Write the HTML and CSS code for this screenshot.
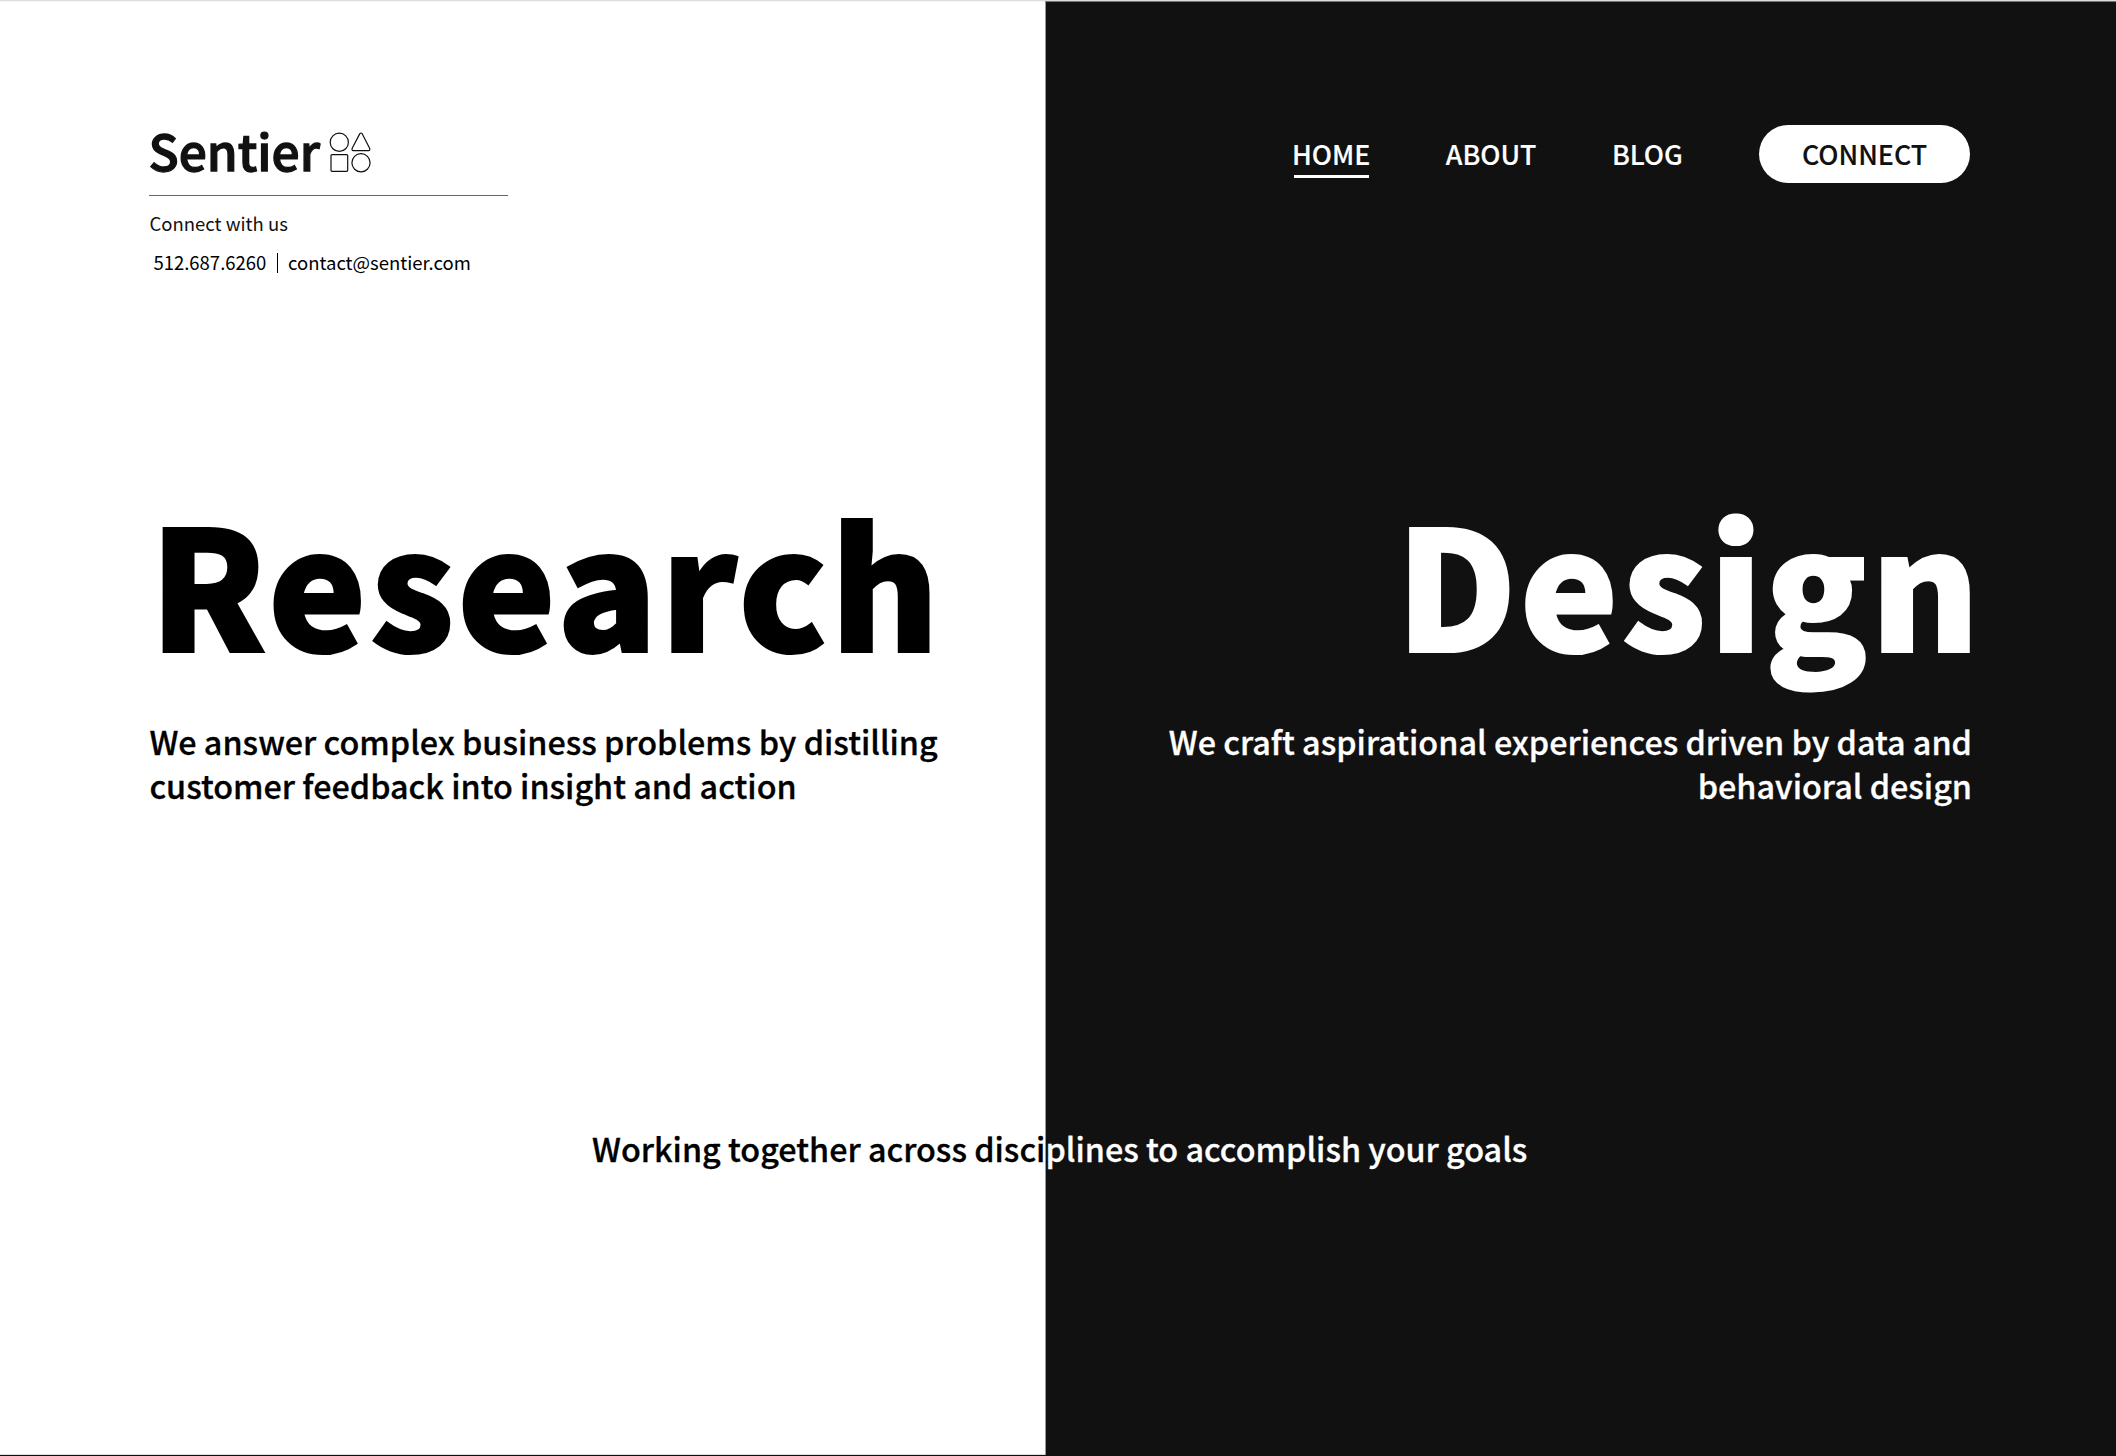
FILE: index.html
```html
<!DOCTYPE html>
<html lang="en">
<head>
<meta charset="utf-8">
<title>Sentier</title>
<link rel="stylesheet" href="styles.css">
</head>
<body>
<main class="page">
  <section class="panel research">
    <header class="top brand">
      <div class="logo">
        <span class="wordmark">Sentier</span>
        <svg class="mark" viewBox="0 0 44 42" width="44" height="42" fill="none" stroke="#111" stroke-width="1.2" stroke-linejoin="round">
          <circle cx="11.3" cy="11.3" r="9.1"/>
          <path d="M31.7 2.9Q33 1.1 34.3 2.9L41.6 17.2Q42.3 19.4 40.5 19.6H25.3Q23.5 19.4 24.2 17.2Z"/>
          <rect x="3" y="23.6" width="16.7" height="16.7" rx="1"/>
          <circle cx="33" cy="31.8" r="9.1"/>
        </svg>
      </div>
      <p class="contact">Connect with us</p>
      <p class="contact details"><span>512.687.6260</span><i class="bar"></i><span>contact@sentier.com</span></p>
    </header>
    <h1 class="title">Research</h1>
    <p class="lead">We answer complex business problems by distilling<br>customer feedback into insight and action</p>
  </section>
  <section class="panel design">
    <nav class="top nav">
      <a class="link active">HOME</a>
      <a class="link">ABOUT</a>
      <a class="link">BLOG</a>
      <a class="button">CONNECT</a>
    </nav>
    <h1 class="title">Design</h1>
    <p class="lead">We craft aspirational experiences driven by data and<br>behavioral design</p>
  </section>
  <p class="lead tagline"><span class="on-light">Working together across disci</span><span class="on-dark">plines to accomplish your goals</span></p>
</main>
</body>
</html>
```
FILE: styles.css
```css
* { box-sizing: border-box; margin: 0; padding: 0; }

body {
  font-family: "Noto Sans CJK SC", "Noto Sans", sans-serif;
  color: #000;
  background: #fff;
}

.page {
  position: relative;
  display: grid;
  grid-template-columns: 1045px 1fr;
  height: 1456px;
  overflow: hidden;
  border-top: 1px solid #ddd;
  border-bottom: 1px solid #111;
}

.panel { padding-top: 117px; }
.research {
  padding-left: 149px;
  background: #fff;
  border-top: 1px solid #f5f5f5;
  border-bottom: 1px solid #ddd;
}
.design {
  padding-right: 146px;
  background: #111;
  color: #fff;
  text-align: right;
  border-top: 1px solid #777;
  border-left: 1px solid #999;
}

.top { height: 376px; }

.logo {
  display: flex;
  align-items: flex-start;
  width: 358.5px;
  height: 77px;
  border-bottom: 1.4px solid #666;
}
.wordmark {
  font-size: 49.6px;
  line-height: 61px;
  font-weight: 500;
  color: #111;
  -webkit-text-stroke: 1.3px #111;
  width: 178px;
  margin-left: -0.5px;
  margin-right: 0.5px;
}
.mark { margin-top: 12px; margin-left: 1px; }

.contact { font-size: 18.5px; line-height: 28px; margin-top: 13px; padding-left: 0.5px; color: #111; }
.details { display: flex; align-items: center; margin-top: 10.5px; padding-left: 4.4px; color: #000; }
.bar { width: 1px; height: 20px; margin: 2px 10.3px 0; background: #000; }

.title {
  font-size: 165.8px;
  line-height: 170px;
  font-weight: 900;
  letter-spacing: 3px;
  -webkit-text-stroke: 2.2px currentColor;
}
.research .title { padding-left: 0.5px; }
.design .title { margin-right: -12.6px; }

.lead {
  font-size: 32.33px;
  line-height: 44px;
  font-weight: 500;
  white-space: nowrap;
  -webkit-text-stroke: 0.3px currentColor;
}
.research .lead, .design .lead { margin-top: 54px; }
.research .lead { padding-left: 0.4px; }
.design .lead { margin-right: -2px; }

.nav {
  display: flex;
  justify-content: flex-end;
  align-items: flex-start;
  gap: 75.4px;
  padding-top: 5.5px;
  font-size: 26.8px;
  line-height: 34px;
  font-weight: 500;
  -webkit-text-stroke: 0.15px currentColor;
}
.link { position: relative; margin-top: 12px; }
.link:nth-child(3) { margin-right: 0.8px; }
.active::after {
  content: "";
  position: absolute;
  left: 2px;
  right: 1.2px;
  top: 38.5px;
  height: 3.4px;
  background: #fff;
}
.button {
  width: 211px;
  height: 58px;
  padding-top: 12px;
  border-radius: 29px;
  background: #fff;
  color: #111;
  text-align: center;
}

.tagline { position: absolute; left: 592px; top: 1125px; }
.on-dark { color: #fff; }
```
